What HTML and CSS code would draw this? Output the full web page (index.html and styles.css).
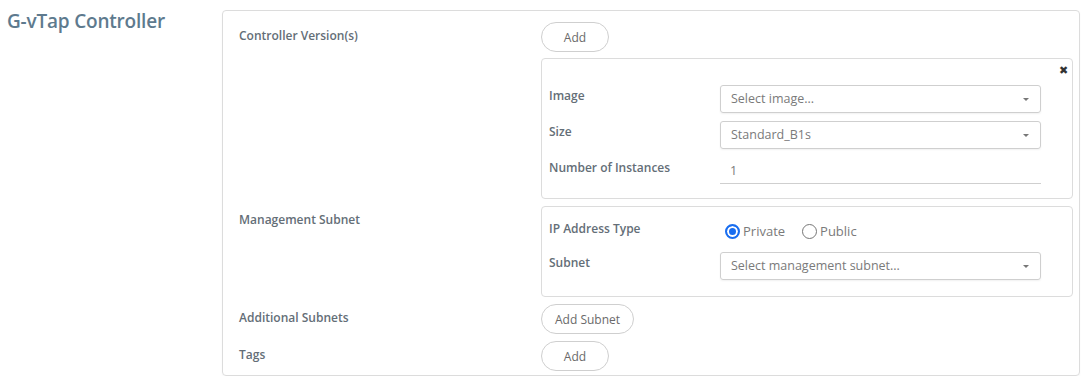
FILE: index.html
```html
<!DOCTYPE html>
<html lang="en">
<head>
    <meta charset="UTF-8">
    <meta name="viewport" content="width=device-width, initial-scale=1.0">
    <title>G-vTap Controller</title>
    <link rel="stylesheet" href="styles.css">
</head>
<body>
    <div class="page">
        <h2 class="section-title">G-vTap Controller</h2>

        <div class="panel">
            <div class="field-label">Controller Version(s)</div>
            <div class="field-body">
                <button class="pill-btn">Add</button>
                <div class="sub-box version-box">
                    <span class="close-btn">&#x2716;</span>
                    <div class="sub-grid">
                        <div class="sub-label">Image</div>
                        <div class="select placeholder">Select image...<span class="caret"></span></div>

                        <div class="sub-label">Size</div>
                        <div class="select">Standard_B1s<span class="caret"></span></div>

                        <div class="sub-label">Number of Instances</div>
                        <div class="line-input">1</div>
                    </div>
                </div>
            </div>

            <div class="field-label">Management Subnet</div>
            <div class="field-body">
                <div class="sub-box subnet-box">
                    <div class="sub-grid">
                        <div class="sub-label">IP Address Type</div>
                        <div class="radio-group">
                            <label class="radio"><span class="dot checked"></span>Private</label>
                            <label class="radio"><span class="dot"></span>Public</label>
                        </div>

                        <div class="sub-label">Subnet</div>
                        <div class="select placeholder">Select management subnet...<span class="caret"></span></div>
                    </div>
                </div>
            </div>

            <div class="field-label">Additional Subnets</div>
            <div class="field-body">
                <button class="pill-btn">Add Subnet</button>
            </div>

            <div class="field-label">Tags</div>
            <div class="field-body">
                <button class="pill-btn">Add</button>
            </div>
        </div>
    </div>
</body>
</html>
```

FILE: styles.css
```css
body {
    margin: 0;
    font-family: "Open Sans", Lato, sans-serif;
    background-color: #fff;
    color: #5f6972;
}
.page {
    display: flex;
    padding: 10px 2px 0 7px;
}
.section-title {
    width: 215px;
    margin: 0;
    font-size: 19px;
    font-weight: 600;
    line-height: 22px;
    letter-spacing: -0.2px;
    color: #5e7a8e;
    flex-shrink: 0;
}
.panel {
    flex: 1;
    display: grid;
    grid-template-columns: 302px 1fr;
    row-gap: 7px;
    padding: 11px 6px 4px 16px;
    border: 1px solid #dcdcdc;
    border-radius: 4px;
    box-shadow: 0 1px 2px rgba(0, 0, 0, 0.04);
}
.field-label {
    font-size: 12px;
    font-weight: 600;
    color: #646e77;
    padding-top: 5px;
}
.field-body {
    display: flex;
    flex-direction: column;
    align-items: flex-start;
    gap: 6px;
}
.pill-btn {
    height: 30px;
    min-width: 68px;
    padding: 0 13px;
    border: 1px solid #cfcfcf;
    border-radius: 15px;
    background: #fff;
    font-family: inherit;
    font-size: 12px;
    color: #6a6a6a;
}
.sub-box {
    position: relative;
    align-self: stretch;
    border: 1px solid #dcdcdc;
    border-radius: 4px;
    padding: 0 31px 0 7px;
}
.version-box {
    padding-top: 26px;
    padding-bottom: 14px;
}
.subnet-box {
    padding-top: 11px;
    padding-bottom: 16px;
}
.close-btn {
    position: absolute;
    top: 3px;
    right: 4px;
    font-size: 11px;
    color: #333;
}
.sub-grid {
    display: grid;
    grid-template-columns: 171px 1fr;
    row-gap: 8px;
    align-items: start;
}
.sub-label {
    font-size: 12px;
    font-weight: 600;
    color: #646e77;
    padding-top: 2px;
}
.select {
    position: relative;
    height: 28px;
    box-sizing: border-box;
    padding: 0 10px;
    line-height: 26px;
    font-size: 12.5px;
    color: #7a7a7a;
    border: 1px solid #cfcfcf;
    border-radius: 3px;
    box-shadow: 0 1px 2px rgba(0, 0, 0, 0.06);
}
.caret {
    position: absolute;
    right: 11px;
    top: 12px;
    border-left: 3px solid transparent;
    border-right: 3px solid transparent;
    border-top: 3px solid #777;
}
.line-input {
    height: 26px;
    line-height: 28px;
    padding: 0 10px;
    font-size: 12.5px;
    color: #7a7a7a;
    border-bottom: 1px solid #cfcfcf;
}
.radio-group {
    display: flex;
    gap: 17px;
    padding-top: 5px;
    padding-left: 5px;
    height: 26px;
    box-sizing: border-box;
}
.radio {
    display: flex;
    align-items: center;
    gap: 3px;
    font-size: 13px;
    color: #7a7a7a;
    height: 16px;
}
.dot {
    width: 15px;
    height: 15px;
    box-sizing: border-box;
    border: 1px solid #767676;
    border-radius: 50%;
    background: #fff;
}
.dot.checked {
    border: 2px solid #1a6ef0;
    background: #1a6ef0;
    box-shadow: inset 0 0 0 2px #fff;
}
```
